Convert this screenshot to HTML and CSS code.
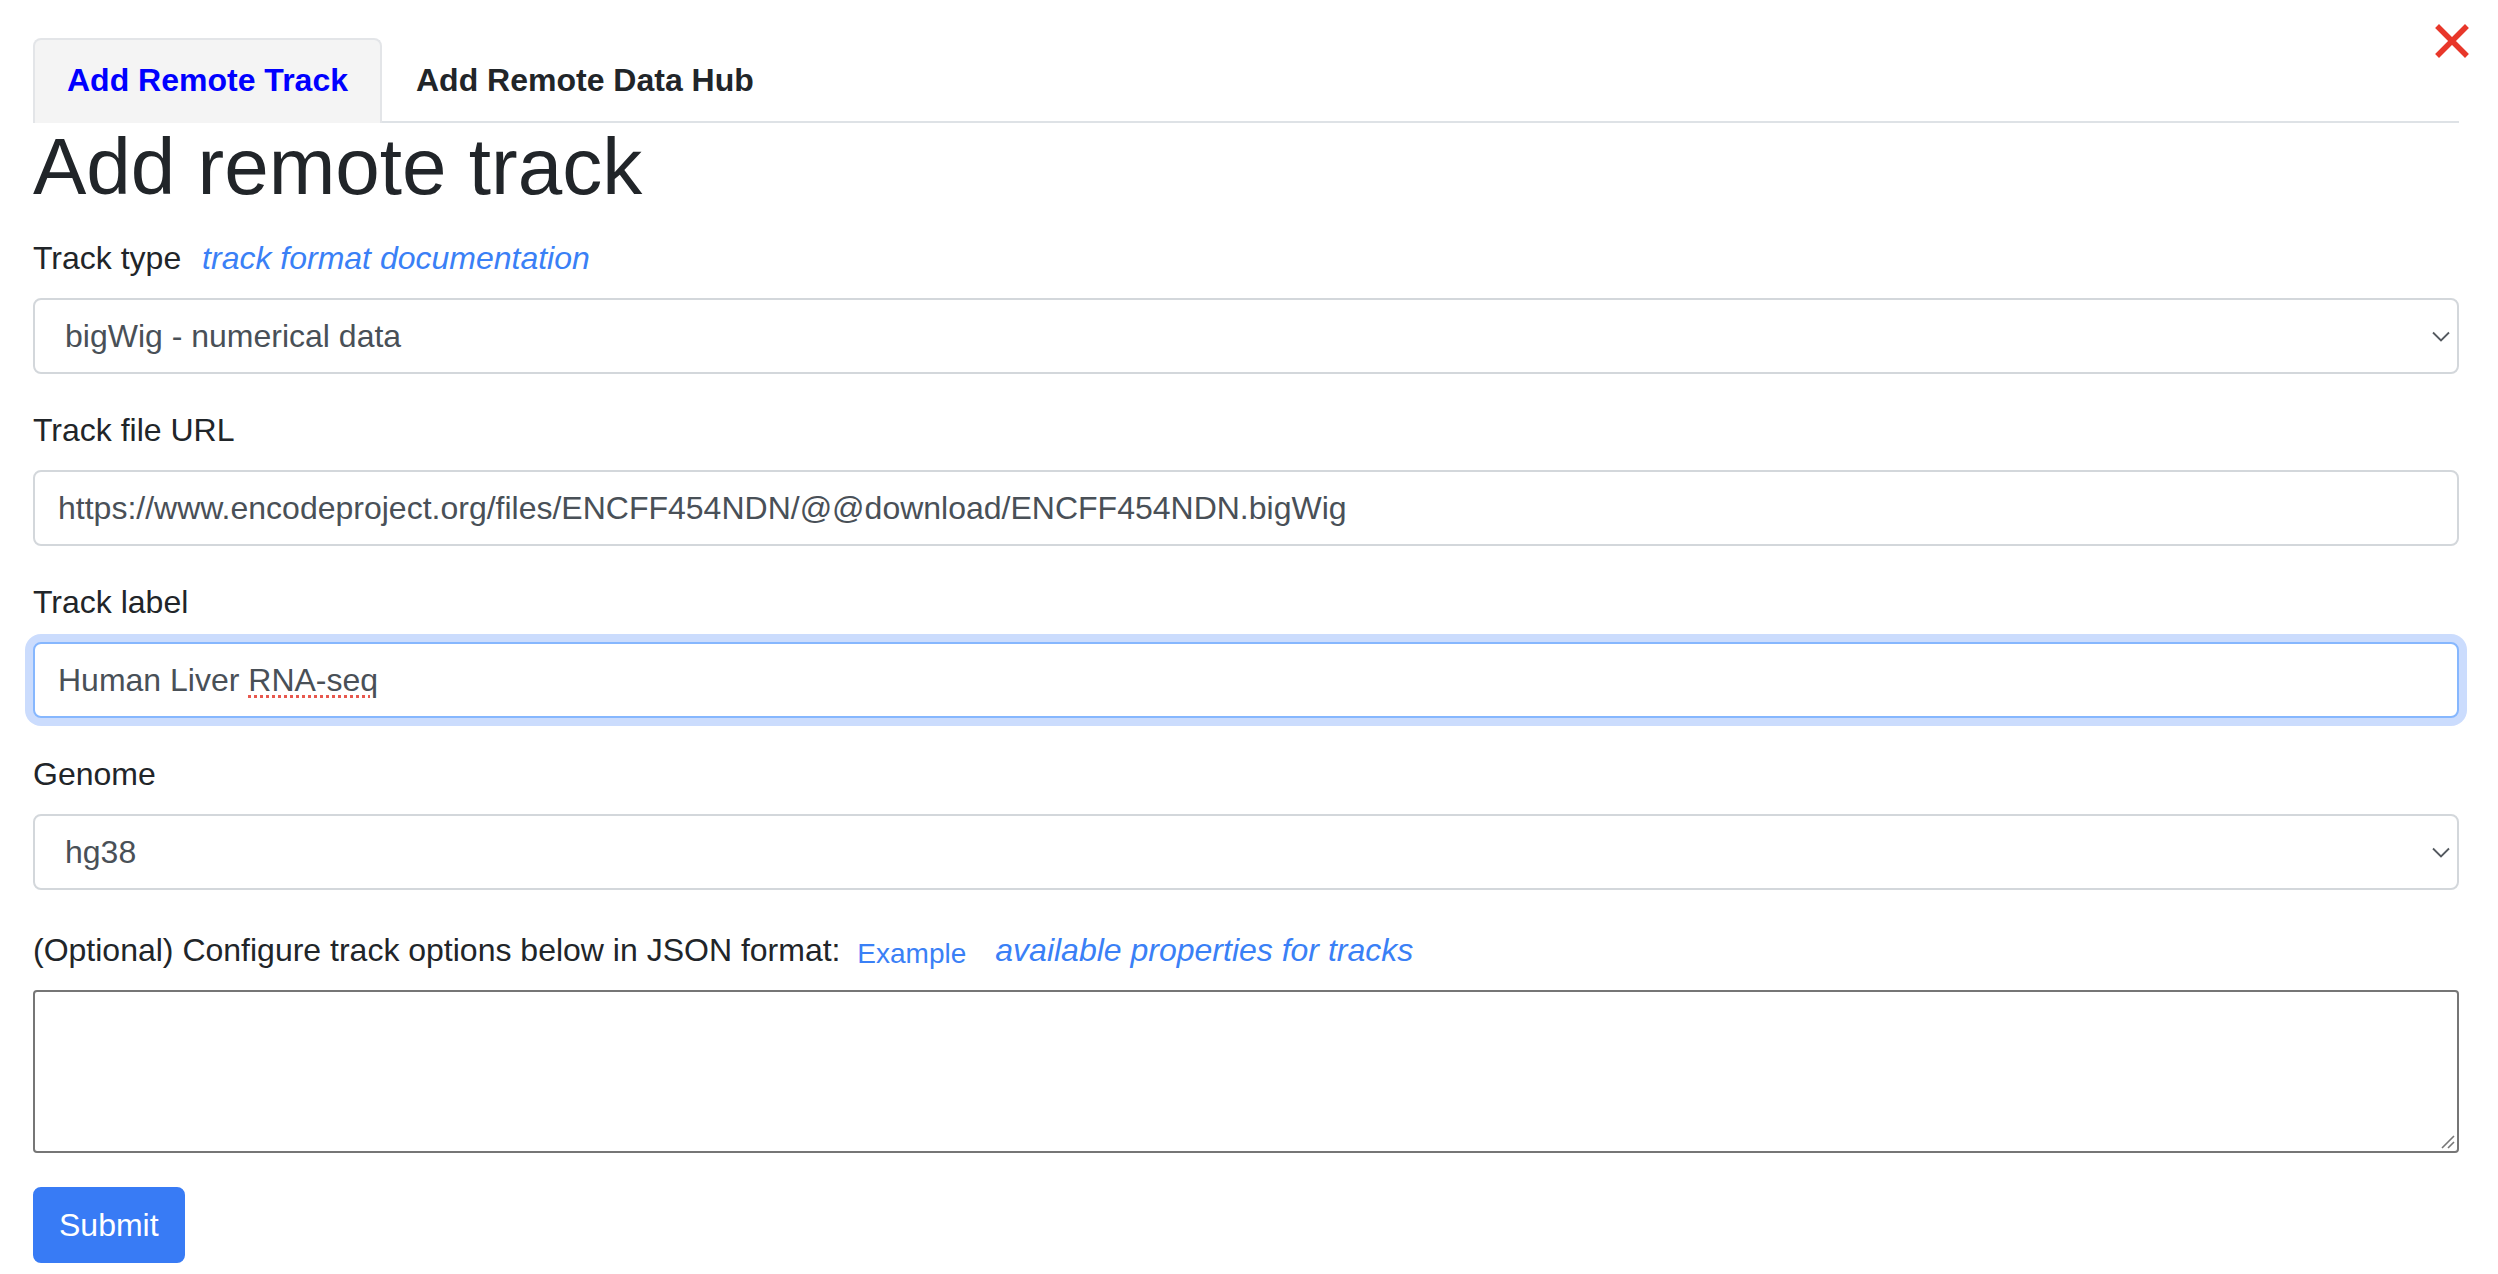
FILE: index.html
```html
<!DOCTYPE html>
<html lang="en">
<head>
<meta charset="utf-8">
<title>Add remote track</title>
<link rel="stylesheet" href="styles.css">
</head>
<body>
<div class="modal">
  <button class="close" aria-label="Close">
    <svg width="34" height="34" viewBox="0 0 34 34"><path d="M4 4 L30 30 M30 4 L4 30" stroke="#e8372a" stroke-width="5.5" stroke-linecap="square" fill="none"/></svg>
  </button>
  <ul class="tabs">
    <li class="tab active">Add Remote Track</li>
    <li class="tab">Add Remote Data Hub</li>
  </ul>
  <h1 class="title">Add remote track</h1>
  <form class="form">
    <div class="group">
      <label class="label">Track type <a class="doc-link">track format documentation</a></label>
      <div class="select">bigWig - numerical data</div>
    </div>
    <div class="group">
      <label class="label">Track file URL</label>
      <div class="input">https://www.encodeproject.org/files/ENCFF454NDN/@@download/ENCFF454NDN.bigWig</div>
    </div>
    <div class="group">
      <label class="label">Track label</label>
      <div class="input focus">Human Liver <span class="misspelled">RNA-seq</span></div>
    </div>
    <div class="group">
      <label class="label">Genome</label>
      <div class="select">hg38</div>
    </div>
    <div class="group group-json">
      <label class="label opt">(Optional) Configure track options below in JSON format: <span class="example">Example</span><a class="doc-link">available properties for tracks</a></label>
      <div class="textarea"><svg class="grip" width="14" height="14" viewBox="0 0 14 14"><path d="M1 13 L13 1 M7 13 L13 7" stroke="#777" stroke-width="1.6" fill="none"/></svg></div>
    </div>
    <div class="actions">
      <span class="btn">Submit</span>
    </div>
  </form>
</div>
</body>
</html>
```
FILE: styles.css
```css
html, body {
  margin: 0;
  padding: 0;
  background: #ffffff;
}
body {
  font-family: "Liberation Sans", Arial, sans-serif;
  font-size: 32px;
  line-height: 48px;
  color: #212529;
}
.modal {
  position: relative;
  padding: 38px 39px 0 33px;
}
.close {
  position: absolute;
  top: 24px;
  right: 29px;
  width: 34px;
  height: 34px;
  padding: 0;
  border: 0;
  background: none;
  display: block;
}
.close svg { display: block; }
.tabs {
  list-style: none;
  margin: 0;
  padding: 0;
  display: flex;
  border-bottom: 2px solid #dee2e6;
}
.tab {
  font-weight: bold;
  padding: 16px 32px 17px;
  border: 2px solid transparent;
  border-bottom: 0;
  border-radius: 8px 8px 0 0;
  color: #212529;
  margin-bottom: -2px;
}
.tab.active {
  background: #f4f4f4;
  border-color: #e3e5e8;
  color: #0000ff;
  padding-bottom: 19px;
}
.title {
  font-size: 80px;
  font-weight: normal;
  line-height: 96px;
  margin: -4px 0 19px;
  color: #212529;
}
.form { margin: 0; }
.group { margin-bottom: 32px; }
.group-json { margin-bottom: 34px; }
.label {
  display: block;
  margin-bottom: 16px;
  color: #212529;
}
.doc-link {
  font-style: italic;
  color: #3a80f6;
  margin-left: 12px;
}
.select, .input {
  box-sizing: border-box;
  height: 76px;
  border: 2px solid #d3d7db;
  border-radius: 8px;
  color: #495057;
  line-height: 48px;
  padding: 12px 24px 12px 23px;
  background: #fff;
}
.select {
  padding-left: 30px;
  background-image: url("data:image/svg+xml;utf8,<svg xmlns='http://www.w3.org/2000/svg' width='18' height='11' viewBox='0 0 18 11'><path d='M1 1.5 L9 9.5 L17 1.5' stroke='%23555a60' stroke-width='1.8' fill='none'/></svg>");
  background-repeat: no-repeat;
  background-position: right 7px center;
}
.input.focus {
  border-color: #86b7fe;
  box-shadow: 0 0 0 8px #cbdcfd;
}
.misspelled {
  text-decoration: underline dotted #e8584e;
  text-decoration-thickness: 3px;
  text-underline-offset: 4px;
}
.label.opt {
  line-height: 48px;
  padding-top: 4px;
  margin-bottom: 14px;
}
.example {
  font-size: 28px;
  color: #3a80f6;
  margin-left: 8px;
  margin-right: 10px;
  position: relative;
  top: 2px;
}
.label.opt .doc-link { margin-left: 19px; }
.textarea {
  box-sizing: border-box;
  height: 163px;
  border: 2px solid #767676;
  border-radius: 4px;
  position: relative;
}
.grip {
  position: absolute;
  right: 2px;
  bottom: 2px;
}
.actions { margin-top: 0; }
.btn {
  display: inline-block;
  box-sizing: border-box;
  height: 76px;
  padding: 12px 24px;
  border: 2px solid #387bf5;
  border-radius: 8px;
  background: #387bf5;
  color: #ffffff;
  line-height: 48px;
}
```
